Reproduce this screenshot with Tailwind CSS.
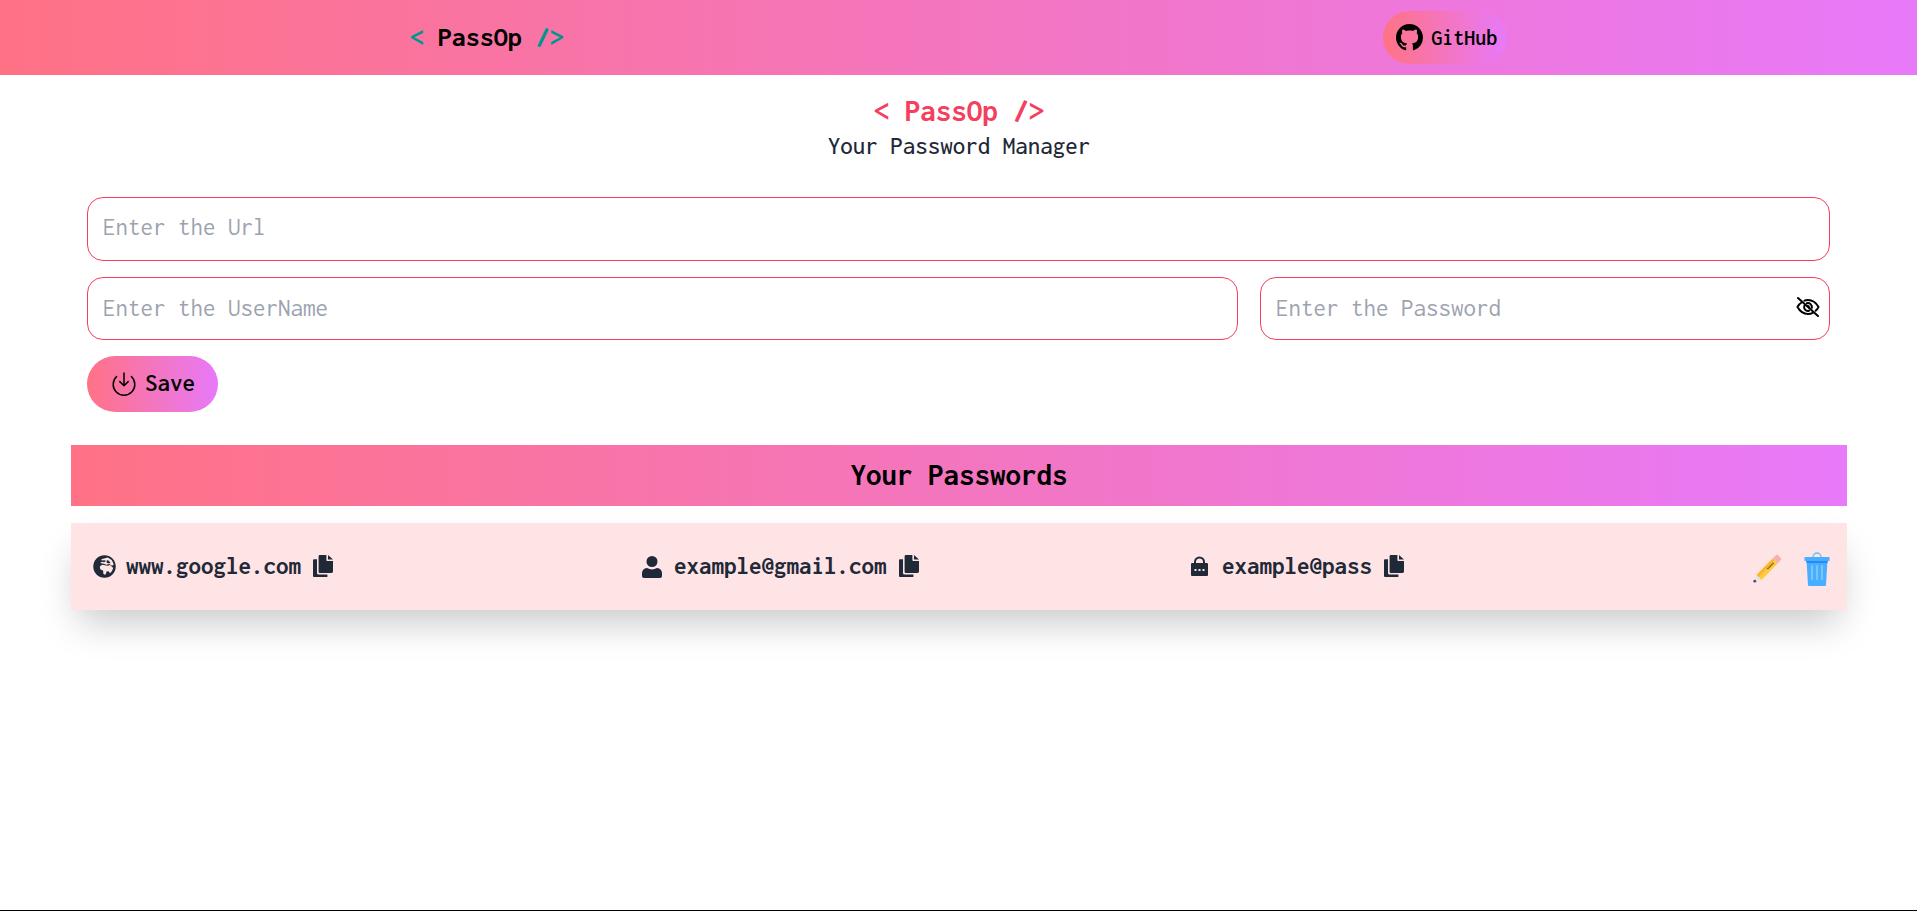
<!DOCTYPE html>
<html lang="en">
<head>
<meta charset="UTF-8">
<meta name="viewport" content="width=device-width, initial-scale=1.0">
<title>PassOp</title>
<script src="https://cdn.jsdelivr.net/npm/@tailwindcss/browser@4"></script>
</head>
<body class="flex min-h-screen flex-col bg-white font-[Inconsolata,'DejaVu_Sans_Mono',monospace] text-black">
<svg class="hidden" aria-hidden="true">
  <symbol id="copy" viewBox="0 0 20 22">
    <path fill="currentColor" d="M6.8 0H13.4V5.2Q13.4 6 14.2 6H20V16.6Q20 18 18.6 18H6.8Q5.6 18 5.6 16.8V1.2Q5.6 0 6.8 0zM15 0L20 4.6H15zM1 4.2H4V18Q4 19.6 5.6 19.6H14.4V22H1Q0 22 0 21V5.2Q0 4.2 1 4.2z"/>
  </symbol>
</svg>

<header class="flex items-center justify-around bg-linear-to-r/srgb from-[#ff7285] to-[#e879f9] py-[11px]">
  <div class="pb-0.5 text-[28px] leading-8 font-bold whitespace-pre"><span class="text-teal-600">&lt;</span> PassOp <span class="text-teal-600">/&gt;</span></div>
  <button type="button" class="flex h-[53px] items-center gap-2 rounded-full bg-linear-to-r/srgb from-[#ff7285] to-[#e879f9] pr-2.5 pl-[13px] text-[22px] font-semibold">
    <svg class="size-[27px]" viewBox="0 0 16 16" fill="currentColor" aria-hidden="true"><path d="M8 0C3.58 0 0 3.58 0 8c0 3.54 2.29 6.53 5.47 7.59.4.07.55-.17.55-.38 0-.19-.01-.82-.01-1.49-2.01.37-2.53-.49-2.69-.94-.09-.23-.48-.94-.82-1.13-.28-.15-.68-.52-.01-.53.63-.01 1.08.58 1.23.82.72 1.21 1.87.87 2.33.66.07-.52.28-.87.51-1.07-1.78-.2-3.64-.89-3.64-3.95 0-.87.31-1.59.82-2.15-.08-.2-.36-1.02.08-2.12 0 0 .67-.21 2.2.82.64-.18 1.32-.27 2-.27s1.36.09 2 .27c1.53-1.04 2.2-.82 2.2-.82.44 1.1.16 1.92.08 2.12.51.56.82 1.27.82 2.15 0 3.07-1.87 3.75-3.65 3.95.29.25.54.73.54 1.48 0 1.07-.01 1.93-.01 2.2 0 .21.15.46.55.38A8.01 8.01 0 0 0 16 8c0-4.42-3.58-8-8-8z"/></svg>
    GitHub
  </button>
</header>

<main class="flex-1 pt-[18px] pr-[70px] pl-[71px]">
  <h1 class="text-center text-[31px] leading-9 font-bold text-[#f43f5e]">&lt; PassOp /&gt;</h1>
  <p class="text-center text-[25px] leading-[34px] font-medium text-[#1f2937]">Your Password Manager</p>

  <form class="mt-[34px] flex flex-col items-start gap-4 pr-[17px] pl-4 text-[25px]">
    <input type="text" aria-label="Url" placeholder="Enter the Url" class="h-16 w-full rounded-2xl border border-[#f43f5e] px-[15px] pb-1 placeholder:text-[#9ca3af]">
    <div class="grid w-full grid-cols-[1151fr_570fr] gap-[22px]">
      <input type="text" aria-label="UserName" placeholder="Enter the UserName" class="h-[63px] w-full rounded-2xl border border-[#f43f5e] px-[15px] pb-0.5 placeholder:text-[#9ca3af]">
      <div class="relative">
        <input type="password" aria-label="Password" placeholder="Enter the Password" class="h-[63px] w-full rounded-2xl border border-[#f43f5e] pr-12 pb-0.5 pl-[15px] placeholder:text-[#9ca3af]">
        <button type="button" aria-label="Show password" class="absolute top-[18px] right-[10px]">
          <svg class="size-6" viewBox="0 0 24 24" fill="none" stroke="currentColor" stroke-width="2" stroke-linecap="round" stroke-linejoin="round" aria-hidden="true">
            <path d="M8.4 5.6Q10 5 12 5C16.500 5 20 7.500 22.500 12Q21.400 14.200 19.600 15.800M6.200 7Q3.200 8.700 1.500 12C4 16.500 7.500 19 12 19Q14.600 19 16.800 17.800"/>
            <path d="M10.800 8.200C13.800 7.500 16.200 9.800 15.800 12.800M8.400 10.600C7.200 13.600 9.800 16.600 13 15.800"/>
            <path d="M11.500 10.800Q13 10.800 13.200 12.500"/>
            <path d="M2 3L22 21"/>
          </svg>
        </button>
      </div>
    </div>
    <button type="button" class="flex h-14 items-center gap-2 rounded-full bg-linear-to-r/srgb from-[#ff7285] to-[#e879f9] pr-[23px] pl-6 font-semibold">
      <svg class="size-[26px]" viewBox="0 0 26 26" fill="none" stroke="currentColor" stroke-width="1.5" stroke-linecap="round" stroke-linejoin="round" aria-hidden="true">
        <path d="M5.600 5.500A10.800 10.800 0 1 0 20.400 5.500M13 2V14.500M8.800 10.600L13 14.800L17.200 10.600"/>
      </svg>
      Save
    </button>
  </form>

  <section>
    <h2 class="mt-[33px] bg-linear-to-r/srgb from-[#ff7285] to-[#e879f9] pb-0.5 text-center text-[31px] leading-[59px] font-bold">Your Passwords</h2>
    <div class="mt-[17px] flex h-[87px] items-center bg-[#ffe4e6] pr-[17px] pl-[22px] text-[25px] font-bold text-[#1f2937] shadow-[0_20px_38px_-8px_rgb(0_0_0/0.22)]">
      <div class="flex flex-1 items-center">
        <svg class="mr-2.5 size-[23px]" viewBox="0 0 512 512" aria-hidden="true">
          <circle cx="256" cy="256" r="250" fill="#1f2937"/>
          <path fill="#ffe4e6" d="M185 95L330 55Q410 90 445 165L462 225Q440 215 425 240L360 200L300 215L240 195L160 180L195 150L250 160L290 135L255 115L195 120z"/>
          <path fill="#ffe4e6" d="M150 260Q190 205 240 220L330 240L380 225L450 290Q430 370 380 405L345 360L300 370L285 430Q260 450 230 420L225 345L165 320z"/>
          <path fill="#1f2937" d="M310 110L350 130L390 175L350 190L300 165z"/>
        </svg>
        <span>www.google.com</span>
        <button type="button" aria-label="Copy site" class="ml-3 pb-0.5"><svg class="h-[22px] w-5" aria-hidden="true"><use href="#copy"/></svg></button>
      </div>
      <div class="flex flex-1 items-center">
        <svg class="mr-2.5 h-[22px] w-[23px]" viewBox="0 0 23 22" fill="currentColor" aria-hidden="true">
          <circle cx="11" cy="5.500" r="5.500"/>
          <path d="M6 12Q8.500 13.400 11 13.400T16 12Q21 12.600 21 17.500V20Q21 22 19 22H3Q1 22 1 20V17.500Q1 12.600 6 12z"/>
        </svg>
        <span>example@gmail.com</span>
        <button type="button" aria-label="Copy username" class="ml-3 pb-0.5"><svg class="h-[22px] w-5" aria-hidden="true"><use href="#copy"/></svg></button>
      </div>
      <div class="flex flex-1 items-center">
        <svg class="mr-2.5 h-[22px] w-[23px]" viewBox="0 0 23 22" aria-hidden="true">
          <path d="M6 9V6A4.500 4.500 0 0 1 15 6V9" fill="none" stroke="#1f2937" stroke-width="2"/>
          <rect x="2" y="7" width="17" height="13" rx="1" fill="#1f2937"/>
          <path d="M5.500 13h2v2h-2zM9.500 13h2v2h-2zM13.500 13h2v2h-2z" fill="#ffe4e6"/>
        </svg>
        <span>example@pass</span>
        <button type="button" aria-label="Copy password" class="ml-3 pb-0.5"><svg class="h-[22px] w-5" aria-hidden="true"><use href="#copy"/></svg></button>
      </div>
      <div class="flex w-[93px] items-center justify-end gap-[22px] pt-1">
        <button type="button" aria-label="Edit">
          <svg class="size-[30px]" viewBox="0 0 30 30" aria-hidden="true">
            <path fill="#e4e4ee" d="M5 20.500L1 29L10 26z"/>
            <circle cx="2.800" cy="27.200" r="1.400" fill="#4d4d57"/>
            <path fill="#fdb72c" d="M4.500 20.800L20.500 4.500L23 7L7 23.500z"/>
            <path fill="#ffcb35" d="M7 23.500L23 7L25.500 9.500L9.500 26z"/>
            <path fill="#f3b3ad" d="M20.500 4.500L24.500 .8Q25.200 .3 25.900 1L29 4.200Q29.500 5 29 5.800L25.500 9.500z"/>
            <path stroke="#6a5530" stroke-width="1.500" stroke-dasharray="1.300 .5" d="M15.500 15L21.500 9"/>
          </svg>
        </button>
        <button type="button" aria-label="Delete">
          <svg class="h-[34px] w-[26px]" viewBox="0 0 26 34" aria-hidden="true">
            <path d="M9 5A4 4 0 0 1 17 5" fill="none" stroke="#6bbcf9" stroke-width="1.300"/>
            <path fill="#48aeff" d="M2.500 8H23.500L22 33Q22 34 21 34H5Q4 34 4 33z"/>
            <path fill="#258cf5" d="M2.300 8H23.700L23.500 11H2.500z"/>
            <rect x=".5" y="5" width="25" height="4" rx=".5" fill="#48aeff"/>
            <path stroke="#9bd2ff" stroke-width="1.200" stroke-linecap="round" d="M8 13.500V27.500M13 13.500V27.500M18 13.500V27.500"/>
          </svg>
        </button>
      </div>
    </div>
  </section>
</main>

<footer class="h-px bg-black"></footer>
</body>
</html>
